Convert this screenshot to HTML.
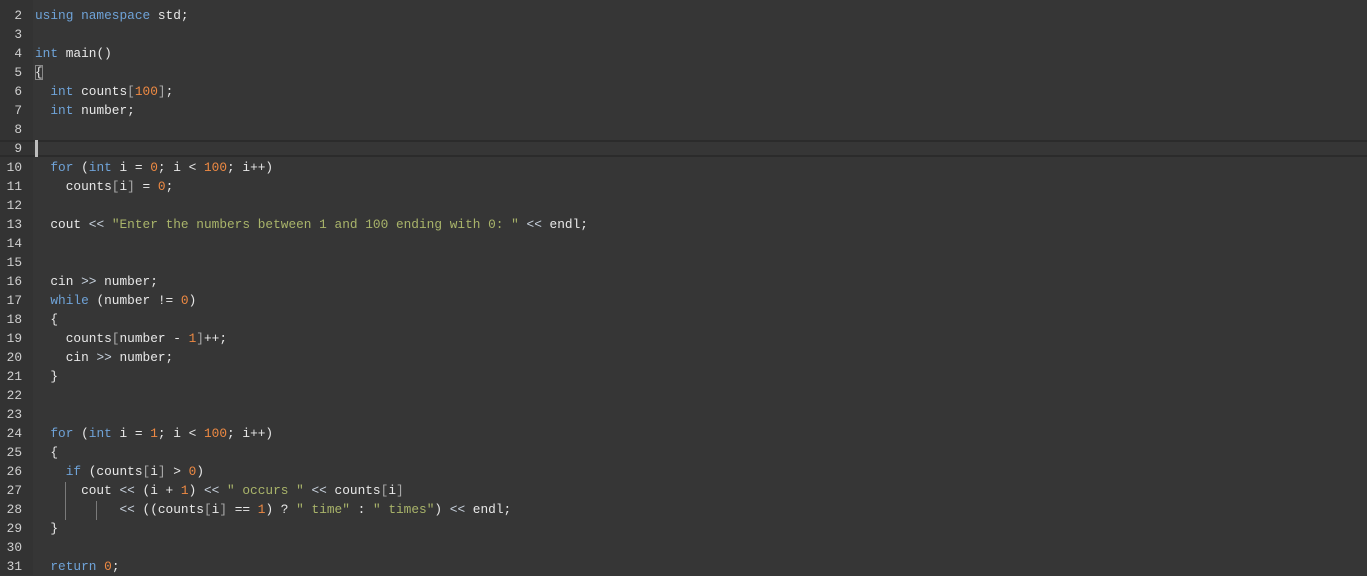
<!DOCTYPE html>
<html><head><meta charset="utf-8"><style>
html,body{margin:0;padding:0;}
body{width:1367px;height:575px;overflow:hidden;background:#363636;position:relative;font-family:"Liberation Mono",monospace;font-size:12.8px;color:#e8e8e8;}
.gut{position:absolute;left:0;top:0;width:33px;height:575px;background:#333333;}
.ln{position:absolute;left:0;width:22px;text-align:right;color:#d0d0d0;height:19px;line-height:19px;}
.c{position:absolute;left:35px;white-space:pre;height:19px;line-height:19px;}
.k{color:#6fa3d8}.n{color:#ef8a43}.s{color:#a9b46a}.p{color:#a8a8a8}.o{color:#c9d3df}
.cur{position:absolute;left:0;right:0;top:140px;height:17px;border-top:2px solid #2b2b2b;border-bottom:2px solid #2b2b2b;box-sizing:border-box;}
.caret{position:absolute;left:35px;top:140px;width:3px;height:17px;background:#bdbdbd;}
.g{position:absolute;width:1px;background:#7a7a7a;}
#w{position:absolute;left:0;top:1px;width:1367px;height:575px;}
</style></head><body>
<div class="gut"></div>
<div class="cur"></div>
<div class="caret"></div>
<div class="g" style="left:65px;top:482px;height:38px"></div>
<div class="g" style="left:96px;top:501px;height:19px"></div>
<div id="w">
<div class="ln" style="top:-14px">1</div><div class="c" style="top:-14px"><span class="p">#include &lt;iostream&gt;</span></div>
<div class="ln" style="top:5px">2</div><div class="c" style="top:5px"><span class="k">using namespace</span> std;</div>
<div class="ln" style="top:24px">3</div>
<div class="ln" style="top:43px">4</div><div class="c" style="top:43px"><span class="k">int</span> main()</div>
<div class="ln" style="top:62px">5</div><div class="c" style="top:62px"><span style="outline:1px solid #888;outline-offset:-1px">{</span></div>
<div class="ln" style="top:81px">6</div><div class="c" style="top:81px">  <span class="k">int</span> counts<span class="p">[</span><span class="n">100</span><span class="p">]</span>;</div>
<div class="ln" style="top:100px">7</div><div class="c" style="top:100px">  <span class="k">int</span> number;</div>
<div class="ln" style="top:119px">8</div>
<div class="ln" style="top:138px">9</div>
<div class="ln" style="top:157px">10</div><div class="c" style="top:157px">  <span class="k">for</span> (<span class="k">int</span> i = <span class="n">0</span>; i &lt; <span class="n">100</span>; i++)</div>
<div class="ln" style="top:176px">11</div><div class="c" style="top:176px">    counts<span class="p">[</span>i<span class="p">]</span> = <span class="n">0</span>;</div>
<div class="ln" style="top:195px">12</div>
<div class="ln" style="top:214px">13</div><div class="c" style="top:214px">  cout <span class="o">&lt;&lt;</span> <span class="s">"Enter the numbers between 1 and 100 ending with 0: "</span> <span class="o">&lt;&lt;</span> endl;</div>
<div class="ln" style="top:233px">14</div>
<div class="ln" style="top:252px">15</div>
<div class="ln" style="top:271px">16</div><div class="c" style="top:271px">  cin <span class="o">&gt;&gt;</span> number;</div>
<div class="ln" style="top:290px">17</div><div class="c" style="top:290px">  <span class="k">while</span> (number != <span class="n">0</span>)</div>
<div class="ln" style="top:309px">18</div><div class="c" style="top:309px">  {</div>
<div class="ln" style="top:328px">19</div><div class="c" style="top:328px">    counts<span class="p">[</span>number - <span class="n">1</span><span class="p">]</span>++;</div>
<div class="ln" style="top:347px">20</div><div class="c" style="top:347px">    cin <span class="o">&gt;&gt;</span> number;</div>
<div class="ln" style="top:366px">21</div><div class="c" style="top:366px">  }</div>
<div class="ln" style="top:385px">22</div>
<div class="ln" style="top:404px">23</div>
<div class="ln" style="top:423px">24</div><div class="c" style="top:423px">  <span class="k">for</span> (<span class="k">int</span> i = <span class="n">1</span>; i &lt; <span class="n">100</span>; i++)</div>
<div class="ln" style="top:442px">25</div><div class="c" style="top:442px">  {</div>
<div class="ln" style="top:461px">26</div><div class="c" style="top:461px">    <span class="k">if</span> (counts<span class="p">[</span>i<span class="p">]</span> &gt; <span class="n">0</span>)</div>
<div class="ln" style="top:480px">27</div><div class="c" style="top:480px">      cout <span class="o">&lt;&lt;</span> (i + <span class="n">1</span>) <span class="o">&lt;&lt;</span> <span class="s">" occurs "</span> <span class="o">&lt;&lt;</span> counts<span class="p">[</span>i<span class="p">]</span></div>
<div class="ln" style="top:499px">28</div><div class="c" style="top:499px">           <span class="o">&lt;&lt;</span> ((counts<span class="p">[</span>i<span class="p">]</span> == <span class="n">1</span>) ? <span class="s">" time"</span> : <span class="s">" times"</span>) <span class="o">&lt;&lt;</span> endl;</div>
<div class="ln" style="top:518px">29</div><div class="c" style="top:518px">  }</div>
<div class="ln" style="top:537px">30</div>
<div class="ln" style="top:556px">31</div><div class="c" style="top:556px">  <span class="k">return</span> <span class="n">0</span>;</div>
</div>
</body></html>
